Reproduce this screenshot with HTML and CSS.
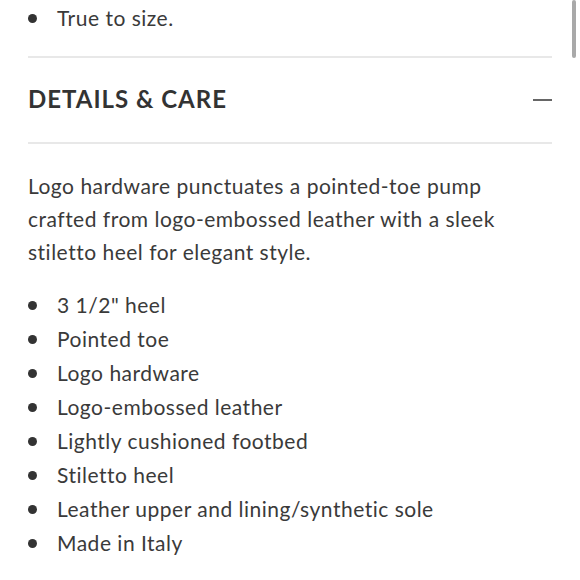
FILE: index.html
```html
<!DOCTYPE html>
<html>
<head>
<meta charset="utf-8">
<link rel="stylesheet" href="styles.css">
</head>
<body>
<div class="page">
  <div class="content">
    <ul class="bullets top">
      <li>True to size.</li>
    </ul>
    <div class="section-head">
      <h2 class="section-title">DETAILS &amp; CARE</h2>
      <span class="toggle" aria-hidden="true"></span>
    </div>
    <div class="section-body">
      <p class="desc">Logo hardware punctuates a pointed-toe pump crafted from logo-embossed leather with a sleek stiletto heel for elegant style.</p>
      <ul class="bullets">
        <li>3 1/2" heel</li>
        <li>Pointed toe</li>
        <li>Logo hardware</li>
        <li>Logo-embossed leather</li>
        <li>Lightly cushioned footbed</li>
        <li>Stiletto heel</li>
        <li>Leather upper and lining/synthetic sole</li>
        <li>Made in Italy</li>
      </ul>
    </div>
  </div>
  <div class="scrollbar"><div class="thumb"></div></div>
</div>
</body>
</html>
```

FILE: styles.css
```css
html, body {
  margin: 0;
  padding: 0;
  background: #ffffff;
}
.page {
  position: relative;
  width: 580px;
  height: 580px;
  overflow: hidden;
  font-family: Lato, "Open Sans", sans-serif;
  color: #3a3a3a;
}
.content {
  margin-left: 28px;
  width: 524px;
}
.bullets {
  list-style: none;
  margin: 0;
  padding: 0;
  font-size: 21px;
  letter-spacing: 0.5px;
  line-height: 34px;
}
.bullets li {
  position: relative;
  padding-left: 29px;
}
.bullets li::before {
  content: "";
  position: absolute;
  left: 0;
  top: 13px;
  width: 9px;
  height: 9px;
  border-radius: 50%;
  background: #333;
}
.bullets.top {
  padding-top: 1px;
  padding-bottom: 21px;
  border-bottom: 2px solid #e8e8e8;
}
.section-head {
  display: flex;
  align-items: center;
  justify-content: space-between;
  height: 84px;
  border-bottom: 2px solid #e8e8e8;
}
.section-title {
  margin: 0;
  padding-bottom: 3px;
  font-size: 24px;
  font-weight: 700;
  letter-spacing: 1px;
  color: #333;
}
.toggle {
  width: 19px;
  height: 2px;
  background: #666;
}
.section-body {
  padding-top: 25px;
}
.desc {
  margin: 0 0 20px 0;
  font-size: 21px;
  letter-spacing: 0.5px;
  line-height: 33px;
}
.scrollbar {
  position: absolute;
  top: 0;
  right: 4px;
  width: 4px;
  height: 58px;
}
.thumb {
  width: 100%;
  height: 100%;
  background: #a9a9a9;
  border-radius: 2px;
}
```
